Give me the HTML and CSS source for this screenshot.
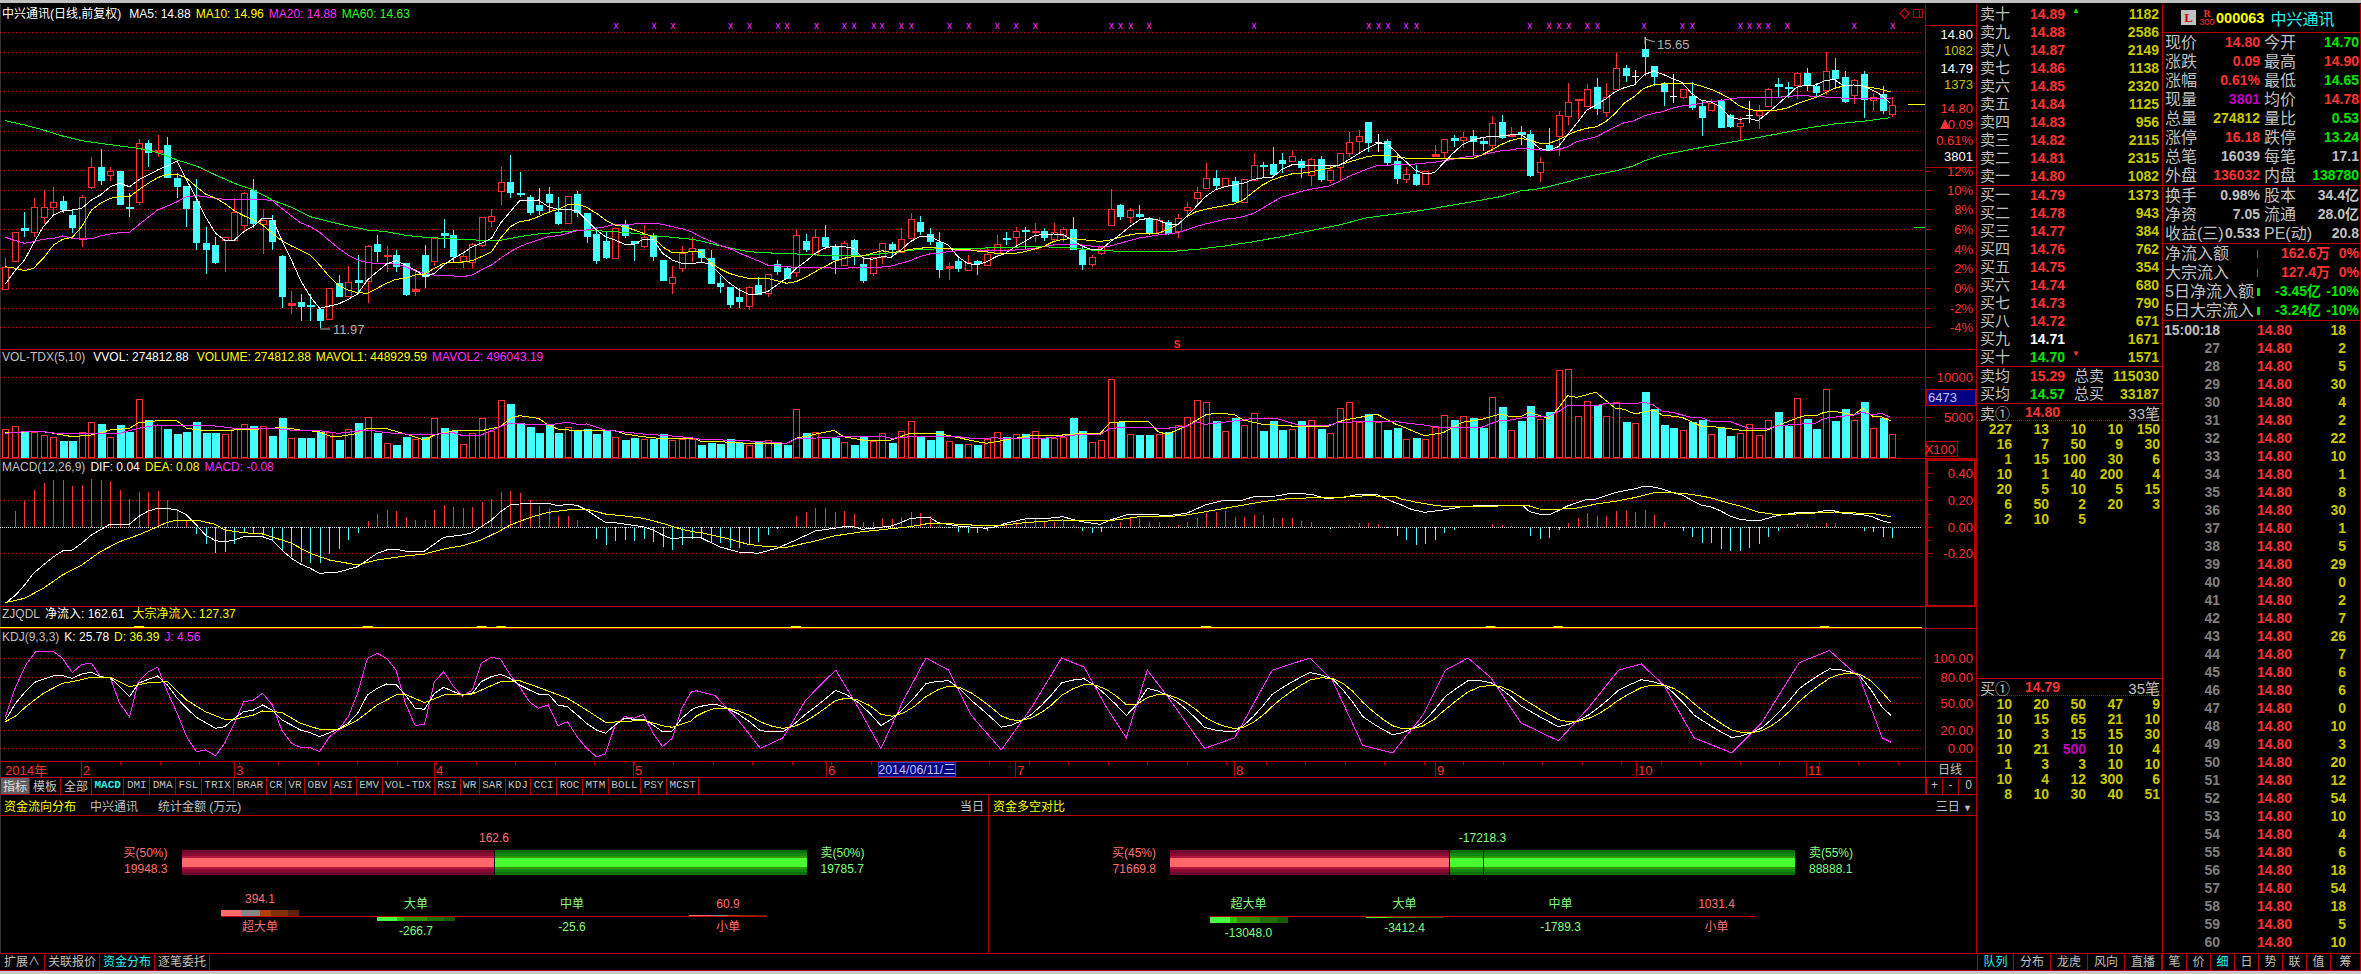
FILE: index.html
```html
<!DOCTYPE html>
<html lang="zh-CN">
<head>
<meta charset="utf-8">
<title>中兴通讯 日线</title>
<link rel="stylesheet" href="styles.css">
</head>
<body>
<div class="app">
  <div class="workspace">
    <section class="market">
      <div class="panel panel-main">
        <div class="panel-title t-main"><span class="w">中兴通讯(日线,前复权)</span><span class="w gap-l">MA5: 14.88</span><span class="y gap">MA10: 14.96</span><span class="m gap">MA20: 14.88</span><span class="g gap">MA60: 14.63</span></div>
        <svg id="svg-main" class="plot h-main"></svg>
      </div>
      <div class="panel panel-vol">
        <div class="panel-title t-vol"><span class="s">VOL-TDX(5,10)</span><span class="w gap-l">VVOL: 274812.88</span><span class="y gap-l">VOLUME: 274812.88</span><span class="y gap">MAVOL1: 448929.59</span><span class="m gap">MAVOL2: 496043.19</span></div>
        <svg id="svg-vol" class="plot h-vol"></svg>
      </div>
      <div class="panel panel-macd">
        <div class="panel-title t-macd"><span class="s">MACD(12,26,9)</span><span class="w gap">DIF: 0.04</span><span class="y gap">DEA: 0.08</span><span class="m gap">MACD: -0.08</span></div>
        <svg id="svg-macd" class="plot h-macd"></svg>
      </div>
      <div class="panel panel-zj">
        <div class="panel-title t-zj"><span class="s">ZJQDL</span><span class="w gap">净流入: 162.61</span><span class="y gap-l">大宗净流入: 127.37</span></div>
        <svg id="svg-zj" class="plot h-zj"></svg>
      </div>
      <div class="panel panel-kdj">
        <div class="panel-title t-kdj"><span class="s">KDJ(9,3,3)</span><span class="w gap">K: 25.78</span><span class="y gap">D: 36.39</span><span class="m gap">J: 4.56</span></div>
        <svg id="svg-kdj" class="plot h-kdj"></svg>
      </div>
      <div class="panel panel-time">
        <svg id="svg-time" class="plot h-time"></svg>
      </div>
      <div class="toolbar">
        <span class="tool tool-cn on">指标</span><span class="tool tool-cn">模板</span><span class="tool tool-cn">全部</span><span class="tool act">MACD</span><span class="tool">DMI</span><span class="tool">DMA</span><span class="tool">FSL</span><span class="tool">TRIX</span><span class="tool">BRAR</span><span class="tool">CR</span><span class="tool">VR</span><span class="tool">OBV</span><span class="tool">ASI</span><span class="tool">EMV</span><span class="tool">VOL-TDX</span><span class="tool">RSI</span><span class="tool">WR</span><span class="tool">SAR</span><span class="tool">KDJ</span><span class="tool">CCI</span><span class="tool">ROC</span><span class="tool">MTM</span><span class="tool">BOLL</span><span class="tool">PSY</span><span class="tool">MCST</span>
        <div class="zoom-btns"><span>+</span><span>-</span><span>0</span></div>
      </div>
      <div class="funds">
        <div class="fund fund-left">
          <div class="fund-head"><strong>资金流向分布</strong><span class="hd-a">中兴通讯</span><span class="hd-b">统计金额 (万元)</span><span class="hd-r">当日</span></div>
          <div class="fund-body">
            <div class="fund-total red">162.6</div>
            <div class="fund-main">
              <div class="fund-side side-l red"><span>买(50%)</span><span>19948.3</span></div>
              <div class="bigbar"><i class="seg-buy w50"></i><i class="seg-sell w50"></i></div>
              <div class="fund-side side-r green"><span>卖(50%)</span><span>19785.7</span></div>
            </div>
            <div class="minis">
              <div class="mini"><div class="mini-up"><span class="red">394.1</span><i class="mb-r mh6"></i></div><div class="mini-down"><span class="red">超大单</span></div></div>
              <div class="mini"><div class="mini-up"><span class="green lift">大单</span></div><div class="mini-down"><i class="mb-g mh4"></i><span class="green">-266.7</span></div></div>
              <div class="mini"><div class="mini-up"><span class="green lift">中单</span></div><div class="mini-down"><span class="green">-25.6</span></div></div>
              <div class="mini"><div class="mini-up"><span class="red lift2">60.9</span><i class="mb-r mh1"></i></div><div class="mini-down"><span class="red">小单</span></div></div>
            </div>
          </div>
        </div>
        <div class="fund fund-right">
          <div class="fund-head"><strong>资金多空对比</strong><span class="hd-r">三日 <em class="caret">▼</em></span></div>
          <div class="fund-body">
            <div class="fund-total green">-17218.3</div>
            <div class="fund-main">
              <div class="fund-side side-l red"><span>买(45%)</span><span>71669.8</span></div>
              <div class="bigbar bar-mark"><i class="seg-buy w45"></i><i class="seg-sell w55"></i></div>
              <div class="fund-side side-r green"><span>卖(55%)</span><span>88888.1</span></div>
            </div>
            <div class="minis">
              <div class="mini"><div class="mini-up"><span class="green lift">超大单</span></div><div class="mini-down"><i class="mb-g mh6"></i><span class="green">-13048.0</span></div></div>
              <div class="mini"><div class="mini-up"><span class="green lift">大单</span></div><div class="mini-down"><i class="mb-g mh1"></i><span class="green">-3412.4</span></div></div>
              <div class="mini"><div class="mini-up"><span class="green lift">中单</span></div><div class="mini-down"><span class="green">-1789.3</span></div></div>
              <div class="mini"><div class="mini-up"><span class="red lift">1031.4</span></div><div class="mini-down"><span class="red">小单</span></div></div>
            </div>
          </div>
        </div>
      </div>
    </section>

    <section class="book">
      <div class="book-group sells">
        <div class="b-row"><span>卖十</span><b class="up">14.89</b><i class="mark mk-g">▲</i><b class="qty">1182</b></div>
        <div class="b-row"><span>卖九</span><b class="up">14.88</b><i></i><b class="qty">2586</b></div>
        <div class="b-row"><span>卖八</span><b class="up">14.87</b><i></i><b class="qty">2149</b></div>
        <div class="b-row"><span>卖七</span><b class="up">14.86</b><i></i><b class="qty">1138</b></div>
        <div class="b-row"><span>卖六</span><b class="up">14.85</b><i></i><b class="qty">2320</b></div>
        <div class="b-row"><span>卖五</span><b class="up">14.84</b><i></i><b class="qty">1125</b></div>
        <div class="b-row"><span>卖四</span><b class="up">14.83</b><i></i><b class="qty">956</b></div>
        <div class="b-row"><span>卖三</span><b class="up">14.82</b><i></i><b class="qty">2115</b></div>
        <div class="b-row"><span>卖二</span><b class="up">14.81</b><i></i><b class="qty">2315</b></div>
        <div class="b-row"><span>卖一</span><b class="up">14.80</b><i></i><b class="qty">1082</b></div>
      </div>
      <div class="book-group buys">
        <div class="b-row"><span>买一</span><b class="up">14.79</b><i></i><b class="qty">1373</b></div>
        <div class="b-row"><span>买二</span><b class="up">14.78</b><i></i><b class="qty">943</b></div>
        <div class="b-row"><span>买三</span><b class="up">14.77</b><i></i><b class="qty">384</b></div>
        <div class="b-row"><span>买四</span><b class="up">14.76</b><i></i><b class="qty">762</b></div>
        <div class="b-row"><span>买五</span><b class="up">14.75</b><i></i><b class="qty">354</b></div>
        <div class="b-row"><span>买六</span><b class="up">14.74</b><i></i><b class="qty">680</b></div>
        <div class="b-row"><span>买七</span><b class="up">14.73</b><i></i><b class="qty">790</b></div>
        <div class="b-row"><span>买八</span><b class="up">14.72</b><i></i><b class="qty">671</b></div>
        <div class="b-row"><span>买九</span><b class="wh">14.71</b><i></i><b class="qty">1671</b></div>
        <div class="b-row"><span>买十</span><b class="dn">14.70</b><i class="mark mk-r">▼</i><b class="qty">1571</b></div>
      </div>
      <div class="book-group avgs">
        <div class="b-row avg"><span>卖均</span><b class="up">15.29</b><span class="lb2">总卖</span><b class="qty">115030</b></div>
        <div class="b-row avg"><span>买均</span><b class="dn">14.57</b><span class="lb2">总买</span><b class="qty">33187</b></div>
      </div>
      <div class="queue queue-s">
        <div class="q-head"><span>卖①</span><b class="up">14.80</b><span class="q-n">33笔</span></div>
        <div class="q-grid">
          <b>227</b><b>13</b><b>10</b><b>10</b><b>150</b>
          <b>16</b><b>7</b><b>50</b><b>9</b><b>30</b>
          <b>1</b><b>15</b><b>100</b><b>30</b><b>6</b>
          <b>10</b><b>1</b><b>40</b><b>200</b><b>4</b>
          <b>20</b><b>5</b><b>10</b><b>5</b><b>15</b>
          <b>6</b><b>50</b><b>2</b><b>20</b><b>3</b>
          <b>2</b><b>10</b><b>5</b>
        </div>
      </div>
      <div class="queue queue-b">
        <div class="q-head"><span>买①</span><b class="up">14.79</b><span class="q-n">35笔</span></div>
        <div class="q-grid">
          <b>10</b><b>20</b><b>50</b><b>47</b><b>9</b>
          <b>10</b><b>15</b><b>65</b><b>21</b><b>10</b>
          <b>10</b><b>3</b><b>15</b><b>15</b><b>30</b>
          <b>10</b><b>21</b><b class="pu">500</b><b>10</b><b>4</b>
          <b>1</b><b>3</b><b>3</b><b>10</b><b>10</b>
          <b>10</b><b>4</b><b>12</b><b>300</b><b>6</b>
          <b>8</b><b>10</b><b>30</b><b>40</b><b>51</b>
        </div>
      </div>
    </section>

    <section class="quote">
      <div class="q-title"><span class="badge">L</span><span class="r300"><b>R</b><small>300</small></span><b class="code">000063</b><span class="name">中兴通讯</span></div>
      <div class="q-block">
        <div class="qr"><div class="qc"><span>现价</span><b class="up">14.80</b></div><div class="qc"><span>今开</span><b class="dn">14.70</b></div></div>
        <div class="qr"><div class="qc"><span>涨跌</span><b class="up">0.09</b></div><div class="qc"><span>最高</span><b class="up">14.90</b></div></div>
        <div class="qr"><div class="qc"><span>涨幅</span><b class="up">0.61%</b></div><div class="qc"><span>最低</span><b class="dn">14.65</b></div></div>
        <div class="qr"><div class="qc"><span>现量</span><b class="pu">3801</b></div><div class="qc"><span>均价</span><b class="up">14.78</b></div></div>
        <div class="qr"><div class="qc"><span>总量</span><b class="qty">274812</b></div><div class="qc"><span>量比</span><b class="dn">0.53</b></div></div>
        <div class="qr"><div class="qc"><span>涨停</span><b class="up">16.18</b></div><div class="qc"><span>跌停</span><b class="dn">13.24</b></div></div>
        <div class="qr"><div class="qc"><span>总笔</span><b class="gr">16039</b></div><div class="qc"><span>每笔</span><b class="gr">17.1</b></div></div>
        <div class="qr"><div class="qc"><span>外盘</span><b class="up">136032</b></div><div class="qc"><span>内盘</span><b class="dn">138780</b></div></div>
      </div>
      <div class="q-block">
        <div class="qr"><div class="qc"><span>换手</span><b class="gr">0.98%</b></div><div class="qc"><span>股本</span><b class="gr">34.4亿</b></div></div>
        <div class="qr"><div class="qc"><span>净资</span><b class="gr">7.05</b></div><div class="qc"><span>流通</span><b class="gr">28.0亿</b></div></div>
        <div class="qr"><div class="qc"><span>收益(三)</span><b class="gr">0.533</b></div><div class="qc"><span>PE(动)</span><b class="gr">20.8</b></div></div>
      </div>
      <div class="q-block">
        <div class="fr"><span class="fl">净流入额</span><i class="tk tk-r"></i><b class="up fv">162.6万</b><b class="up fp">0%</b></div>
        <div class="fr"><span class="fl">大宗流入</span><i class="tk tk-r"></i><b class="up fv">127.4万</b><b class="up fp">0%</b></div>
        <div class="fr"><span class="fl">5日净流入额</span><i class="tk tk-g"></i><b class="dn fv2">-3.45亿</b><b class="dn fp">-10%</b></div>
        <div class="fr"><span class="fl">5日大宗流入</span><i class="tk tk-g"></i><b class="dn fv2">-3.24亿</b><b class="dn fp">-10%</b></div>
      </div>
      <div id="ticks" class="ticks">
        <div class="tr"><b class="first">15:00:18</b><b class="up">14.80</b><b class="qty">18</b></div>
        <div class="tr"><b>27</b><b class="up">14.80</b><b class="qty">2</b></div>
        <div class="tr"><b>28</b><b class="up">14.80</b><b class="qty">5</b></div>
        <div class="tr"><b>29</b><b class="up">14.80</b><b class="qty">30</b></div>
        <div class="tr"><b>30</b><b class="up">14.80</b><b class="qty">4</b></div>
        <div class="tr"><b>31</b><b class="up">14.80</b><b class="qty">2</b></div>
        <div class="tr"><b>32</b><b class="up">14.80</b><b class="qty">22</b></div>
        <div class="tr"><b>33</b><b class="up">14.80</b><b class="qty">10</b></div>
        <div class="tr"><b>34</b><b class="up">14.80</b><b class="qty">1</b></div>
        <div class="tr"><b>35</b><b class="up">14.80</b><b class="qty">8</b></div>
        <div class="tr"><b>36</b><b class="up">14.80</b><b class="qty">30</b></div>
        <div class="tr"><b>37</b><b class="up">14.80</b><b class="qty">1</b></div>
        <div class="tr"><b>38</b><b class="up">14.80</b><b class="qty">5</b></div>
        <div class="tr"><b>39</b><b class="up">14.80</b><b class="qty">29</b></div>
        <div class="tr"><b>40</b><b class="up">14.80</b><b class="qty">0</b></div>
        <div class="tr"><b>41</b><b class="up">14.80</b><b class="qty">2</b></div>
        <div class="tr"><b>42</b><b class="up">14.80</b><b class="qty">7</b></div>
        <div class="tr"><b>43</b><b class="up">14.80</b><b class="qty">26</b></div>
        <div class="tr"><b>44</b><b class="up">14.80</b><b class="qty">7</b></div>
        <div class="tr"><b>45</b><b class="up">14.80</b><b class="qty">6</b></div>
        <div class="tr"><b>46</b><b class="up">14.80</b><b class="qty">6</b></div>
        <div class="tr"><b>47</b><b class="up">14.80</b><b class="qty">0</b></div>
        <div class="tr"><b>48</b><b class="up">14.80</b><b class="qty">10</b></div>
        <div class="tr"><b>49</b><b class="up">14.80</b><b class="qty">3</b></div>
        <div class="tr"><b>50</b><b class="up">14.80</b><b class="qty">20</b></div>
        <div class="tr"><b>51</b><b class="up">14.80</b><b class="qty">12</b></div>
        <div class="tr"><b>52</b><b class="up">14.80</b><b class="qty">54</b></div>
        <div class="tr"><b>53</b><b class="up">14.80</b><b class="qty">10</b></div>
        <div class="tr"><b>54</b><b class="up">14.80</b><b class="qty">4</b></div>
        <div class="tr"><b>55</b><b class="up">14.80</b><b class="qty">6</b></div>
        <div class="tr"><b>56</b><b class="up">14.80</b><b class="qty">18</b></div>
        <div class="tr"><b>57</b><b class="up">14.80</b><b class="qty">54</b></div>
        <div class="tr"><b>58</b><b class="up">14.80</b><b class="qty">18</b></div>
        <div class="tr"><b>59</b><b class="up">14.80</b><b class="qty">5</b></div>
        <div class="tr"><b>60</b><b class="up">14.80</b><b class="qty">10</b></div>
      </div>
    </section>
  </div>
  <footer class="tabbar">
    <div class="tabs tabs-a"><span>扩展∧</span><span>关联报价</span><span class="cy">资金分布</span><span>逐笔委托</span></div>
    <div class="tabs tabs-b"><span class="cy">队列</span><span>分布</span><span>龙虎</span><span>风向</span><span>直播</span></div>
    <div class="tabs tabs-c"><span>笔</span><span>价</span><span class="cy">细</span><span>日</span><span>势</span><span>联</span><span>值</span><span>筹</span></div>
  </footer>
</div>
<script src="app.js"></script>
</body>
</html>
```
FILE: styles.css
```css
* { box-sizing: border-box; }
html, body { margin: 0; padding: 0; background: #000; }
body { font-family: "Liberation Sans", "Noto Sans CJK SC", sans-serif; overflow: hidden; }
.app { width: 2361px; height: 974px; background: #000; border-top: 3px solid #c0c0c0; border-bottom: 3px solid #c8c8c8; display: flex; flex-direction: column; padding-top: 1px; color: #c0c0c0; }
.workspace { display: flex; height: 949px; }
.market { width: 1976px; display: flex; flex-direction: column; border-left: 1px solid #333; }
.panel { position: relative; border-bottom: 1px solid #b40000; margin-left: -1px; }
.panel-main { height: 346px; }
.panel-vol { height: 109px; }
.panel-macd { height: 148px; }
.panel-zj { height: 22px; }
.panel-kdj { height: 133px; }
.panel-time { height: 16px; }
.plot { display: block; width: 1976px; }
.h-main { height: 345px; }
.h-vol { height: 108px; }
.h-macd { height: 147px; }
.h-zj { height: 21px; }
.h-kdj { height: 132px; }
.h-time { height: 15px; }
.panel-title { position: absolute; left: 2px; font-size: 12px; line-height: 14px; white-space: nowrap; z-index: 2; }
.t-main { top: 3px; }
.t-vol { top: 0; }
.t-macd { top: 1px; }
.t-zj { top: 0; }
.t-kdj { top: 1px; }
.gap { margin-left: 5px; }
.gap-l { margin-left: 8px; }
.w { color: #fff; }
.s { color: #c0c0c0; }
.y { color: #ff0; }
.m { color: #ff2dff; }
.g { color: #2dff2d; }

/* svg classes */
.grid { stroke: #c80000; stroke-width: 1; stroke-dasharray: 1 3; shape-rendering: crispEdges; }
.zero { stroke: #e0e0e0; stroke-width: 1; stroke-dasharray: 1 1; shape-rendering: crispEdges; }
.rule { stroke: #b40000; stroke-width: 1; shape-rendering: crispEdges; fill: none; }
.rule2 { stroke: #b40000; stroke-width: 2; shape-rendering: crispEdges; fill: none; }
.c-r { stroke: #ff3232; fill: #000; stroke-width: 1; shape-rendering: crispEdges; }
.c-rf { stroke: #ff3232; fill: #ff3232; stroke-width: 1; shape-rendering: crispEdges; }
.c-c { stroke: #44ffff; fill: #44ffff; stroke-width: 1; shape-rendering: crispEdges; }
.c-w { stroke: #fff; fill: #fff; stroke-width: 1; shape-rendering: crispEdges; }
.l-w, .l-y, .l-m, .l-g { fill: none; stroke-width: 1; shape-rendering: crispEdges; }
.l-w { stroke: #fff; }
.l-y { stroke: #ff0; }
.l-m { stroke: #ff2dff; }
.l-g { stroke: #19f019; }
.ax { font-size: 13px; fill: #ff3232; text-anchor: end; dominant-baseline: central; }
.ax-w { fill: #fff; }
.ax-o { fill: #c8c800; }
.ax-lb { fill: #c0c0ff; text-anchor: start; }
.xm { font-size: 10px; fill: #ff2dff; text-anchor: middle; dominant-baseline: central; }
.note { font-size: 13px; fill: #b0b0b0; dominant-baseline: central; }
.note-l { fill: none; stroke: #b0b0b0; stroke-width: 1; }
.sm { font-size: 10px; font-weight: bold; fill: #ff3232; text-anchor: middle; dominant-baseline: central; }
.tl { font-size: 13px; fill: #ff3232; dominant-baseline: central; }
.tl-d { font-size: 12.5px; fill: #c0c0ff; text-anchor: middle; dominant-baseline: central; }
.tl-box { fill: #000080; stroke: #3838c0; shape-rendering: crispEdges; }
.tl-c { font-size: 12px; fill: #c0c0c0; text-anchor: middle; dominant-baseline: central; }
.blue-box { fill: #000080; stroke: #b40000; shape-rendering: crispEdges; }
.y-bump { fill: #ff0; }
.tri { fill: #ff3232; }

/* toolbar */
.toolbar { display: flex; height: 17px; border-bottom: 1px solid #b40000; margin-left: -1px; position: relative; align-items: stretch; }
.tool { font-family: "Liberation Mono", "Noto Sans CJK SC", monospace; font-size: 11px; line-height: 15px; padding: 0 2.5px; border-right: 1px solid #b40000; color: #c0c0c0; white-space: nowrap; text-align: center; }
.tool-cn { font-family: "Noto Sans CJK SC", sans-serif; font-size: 12px; padding: 0 3px; width: 31px; }
.tool.on { background: #606060; color: #e0e0e0; margin-left: 1px; width: 29px; padding: 0 2px; }
.tool.act { color: #28f0f0; font-weight: bold; }
.zoom-btns { margin-left: auto; width: 51px; display: grid; grid-template-columns: 16px 16px 19px; border-left: 2px solid #b40000; }
.zoom-btns span { text-align: center; font-size: 12px; line-height: 15px; border-right: 1px solid #b40000; color: #c0c0c0; }
.zoom-btns span:last-child { border-right: 0; }

/* funds */
.funds { display: flex; height: 158px; margin-left: -1px; }
.fund { display: flex; flex-direction: column; }
.fund-left { width: 989px; border-right: 1px solid #b40000; }
.fund-right { width: 987px; }
.fund-head { height: 21px; border-bottom: 1px solid #b40000; display: flex; align-items: center; font-size: 12px; color: #c0c0c0; padding: 0 4px; white-space: nowrap; }
.fund-head strong { color: #ff0; font-weight: normal; }
.hd-a { margin-left: 14px; }
.hd-b { margin-left: 20px; }
.hd-r { margin-left: auto; }
.caret { font-style: normal; font-size: 9px; }
.fund-body { flex: 1; display: flex; flex-direction: column; align-items: center; font-size: 12px; }
.red { color: #ff7070; }
.green { color: #80ff80; }
.fund-total { margin-top: 15px; line-height: 14px; height: 19px; }
.fund-main { display: grid; grid-template-columns: 60px 625px 60px; column-gap: 14px; align-items: start; height: 25px; }
.fund-side { display: flex; flex-direction: column; line-height: 16px; margin-top: -5px; }
.side-l { text-align: right; }
.bigbar { height: 25px; display: flex; position: relative; }
.bigbar i { display: block; height: 25px; }
.w50 { width: 50%; }
.w45 { width: 44.6%; }
.w55 { width: 55.4%; }
.seg-buy { background: linear-gradient(#6e0a30 0 3px, #8c0a30 3px 6px, #b41440 6px 8px, #ff6868 8px 17px, #b41440 17px 19px, #8c0a30 19px 22px, #6e0a30 22px); }
.seg-sell { background: linear-gradient(#0a700a 0 3px, #108a10 3px 6px, #309a00 6px 8px, #46ff30 8px 17px, #309a00 17px 19px, #108a10 19px 22px, #0a700a 22px); border-left: 1px solid #000; }
.bar-mark::after { content: ""; position: absolute; left: 313px; top: 0; width: 1px; height: 25px; background: #000; }
.minis { display: grid; grid-template-columns: repeat(4, 78px); column-gap: 78px; margin-top: 15px; width: 546px; background: linear-gradient(#c00000, #c00000) no-repeat 0 26px / 100% 1px; }
.mini { display: flex; flex-direction: column; align-items: center; }
.mini-up { height: 26px; width: 78px; display: flex; flex-direction: column; align-items: center; justify-content: flex-end; }
.mini-down { width: 78px; padding-top: 1px; display: flex; flex-direction: column; align-items: center; }
.mini span { line-height: 14px; }
.mini-up span { margin-bottom: 4px; }
.mini-up .lift { margin-bottom: 5px; }
.mini-up .lift2 { margin-bottom: 4px; }
.mini-down span { margin-top: 3px; }
.mb-r, .mb-g { display: block; width: 78px; flex: none; }
.mb-r { background: linear-gradient(90deg, #ff6a6a 0 20px, #888 20px 39px, #b04000 39px 50px, #803000 50px 67px, #602000 67px); }
.mb-g { background: linear-gradient(90deg, #44ff44 0 20px, #30c000 20px 27px, #309000 27px 50px, #207000 50px 67px, #185a00 67px); }
.mh6 { height: 6px; }
.mh4 { height: 4px; }
.mh1 { height: 1px; }

/* order book */
.book { width: 186px; border-left: 1px solid #b40000; display: flex; flex-direction: column; }
.book-group { border-bottom: 1px solid #b40000; padding-left: 3px; padding-right: 3px; }
.sells { padding-top: 1px; height: 182px; }
.buys { height: 181px; }
.avgs { height: 37px; }
.b-row { display: grid; grid-template-columns: 50px 42px 1fr auto; height: 18px; align-items: center; line-height: 18px; font-size: 15px; color: #c0c0c0; white-space: nowrap; }
.b-row.avg { grid-template-columns: 50px 44px auto 1fr; }
.lb2 { color: #c0c0c0; }
.b-row .qty { text-align: right; }
.b-row .lb2 + .qty { justify-self: end; }
b { font-size: 14px; font-weight: bold; }
.up { color: #ff3232; }
.dn { color: #00e600; }
.wh { color: #fff; }
.qty { color: #c8c800; }
.pu { color: #c000c0; }
.gr { color: #c0c0c0; }
i { font-style: normal; }
.mark { font-size: 8px; line-height: 12px; align-self: start; }
.mk-g { color: #00e600; }
.mk-r { color: #ff3232; }
.queue-s { height: 275px; border-bottom: 1px solid #b40000; }
.queue-b { flex: 1; }
.q-head { display: flex; height: 17px; align-items: center; padding: 0 2px 0 3px; font-size: 15px; color: #c0c0c0; border-bottom: 1px dotted #c80000; white-space: nowrap; }
.q-head b { margin-left: 15px; }
.q-n { margin-left: auto; }
.q-grid { display: grid; grid-template-columns: 35px repeat(4, 37px); padding-top: 1px; }
.q-grid b { text-align: right; height: 15px; line-height: 15px; color: #c8c800; }
.q-grid b.pu { color: #c000c0; }

/* quote */
.quote { width: 199px; border-left: 1px solid #b40000; border-right: 1px solid #b40000; display: flex; flex-direction: column; }
.q-title { height: 29px; border-bottom: 1px solid #b40000; display: flex; align-items: center; padding-left: 18px; padding-bottom: 1px; }
.badge { width: 15px; height: 15px; background: #c0c0c0; color: #d00000; font: bold 13px/15px "Liberation Serif", serif; text-align: center; }
.r300 { width: 16px; margin-left: 3px; display: flex; flex-direction: column; align-items: center; color: #ff3232; line-height: 9px; }
.r300 b { font-size: 10px; font-family: "Liberation Serif", serif; line-height: 9px; }
.r300 small { font-size: 9px; line-height: 9px; }
.code { color: #ff0; margin-left: 1px; font-size: 14.5px; }
.name { color: #28f0f0; font-size: 16px; margin-left: 6px; }
.q-block { border-bottom: 1px solid #b40000; padding: 0 1px 0 2px; }
.qr { display: flex; height: 19px; gap: 4px; align-items: center; }
.qc { width: 95px; display: flex; justify-content: space-between; align-items: center; font-size: 16px; line-height: 19px; color: #c0c0c0; white-space: nowrap; }
.fr { display: flex; height: 19px; align-items: center; font-size: 16px; line-height: 19px; color: #c0c0c0; white-space: nowrap; }
.fl { width: 92px; }
.tk { display: block; height: 8px; flex: none; }
.tk-r { width: 1px; background: #c04040; margin-right: 2px; }
.tk-g { width: 3px; background: #00e600; }
.fv { width: 70px; text-align: right; white-space: nowrap; flex: none; }
.fv2 { width: 61px; text-align: right; white-space: nowrap; flex: none; }
.fp { flex: 1; text-align: right; }
.ticks { flex: 1; }
.tr { display: grid; grid-template-columns: 57px 72px 54px; height: 18px; line-height: 18px; }
.tr b { text-align: right; }
.tr b:first-child { color: #808080; }
.tr b.first { color: #c0c0c0; }

/* tab bar */
.tabbar { display: flex; height: 18px; border-top: 1px solid #b40000; border-bottom: 1px solid #b40000; }
.tabs { display: flex; height: 16px; }
.tabs span { font-size: 12px; line-height: 16px; border-right: 1px solid #b40000; text-align: center; color: #c0c0c0; white-space: nowrap; }
.tabs .cy { color: #28f0f0; }
.tabs-a { width: 1977px; }
.tabs-a span:nth-child(1) { width: 45px; }
.tabs-a span:nth-child(n+2) { width: 55px; }
.tabs-b { width: 185px; border-left: 1px solid #b40000; }
.tabs-b span { width: 37px; }
.tabs-b span:first-child { width: 36px; }
.tabs-c { flex: 1; border-left: 1px solid #b40000; }
.tabs-c span { width: 24px; }
.tabs-c span:last-child { width: 30px; }
```
FILE: app.js
```js
(function () {
  var Z1 = [0, 2.24], Z2 = [700, 2.24], Z3 = [1400, 1568 / 580];
  var XI = function (i) { return 5.4 + 9.53 * i; };
  function seg(z, y0, a) {
    var o = [];
    for (var i = 0; i < a.length; i += 2) o.push([z[0] + a[i] / z[1], y0 + a[i + 1] / 3]);
    return o;
  }
  function poly(p, cls) {
    return '<polyline class="' + cls + '" points="' + p.map(function (q) { return q[0].toFixed(1) + ',' + q[1].toFixed(1); }).join(' ') + '"/>';
  }
  function ln(x1, y1, x2, y2, c) { return '<line class="' + c + '" x1="' + x1 + '" y1="' + y1 + '" x2="' + x2 + '" y2="' + y2 + '"/>'; }
  function rc(x, y, w, h, c) { return '<rect class="' + c + '" x="' + x + '" y="' + y + '" width="' + w + '" height="' + h + '"/>'; }
  function tx(x, y, s, c) { return '<text class="' + c + '" x="' + x + '" y="' + y + '">' + s + '</text>'; }
  function put(id, top, h, body) {
    var el = document.getElementById(id);
    el.setAttribute('viewBox', '0 ' + top + ' 1976 ' + h);
    el.innerHTML = body;
  }

  /* type, bodyTop, bodyBottom, wickTop, wickBottom — chart pixels x3 */
  var C = [
    'R',800,865,775,865, 'R',697,785,697,785, 'C',685,690,637,712, 'R',620,695,595,712, 'R',620,650,570,672,
    'R',605,620,562,645, 'C',603,627,588,640, 'C',645,682,630,698, 'R',590,712,585,742, 'R',502,563,472,566,
    'C',502,540,448,555, 'R',512,525,500,542, 'C',514,612,514,614, 'C',622,626,580,650, 'R',428,605,418,615,
    'C',428,455,420,500, 'R',452,458,405,470, 'C',435,530,412,535, 'C',534,558,520,595, 'C',558,624,558,680,
    'C',603,725,538,750, 'C',729,747,682,822, 'C',735,786,712,792, 'R',712,722,712,815, 'R',637,720,595,722,
    'R',580,677,575,695, 'C',570,670,538,685, 'R',660,672,628,762, 'C',660,722,645,750, 'C',768,887,765,925,
    'R',910,915,873,942, 'C',906,918,882,962, 'C',915,920,883,962, 'C',927,960,927,985, 'R',865,958,865,958,
    'C',850,890,825,892, 'R',847,890,797,892, 'C',840,846,765,880, 'R',738,842,735,908, 'C',732,752,705,785,
    'R',766,770,738,815, 'C',766,798,750,815, 'C',790,882,788,888, 'R',868,875,808,888, 'C',766,830,735,865,
    'R',715,785,712,798, 'C',700,706,658,745, 'C',706,770,690,790, 'R',767,782,760,805, 'R',733,787,730,805,
    'R',652,735,652,740, 'R',647,662,628,682, 'R',547,575,500,615, 'C',547,578,465,595, 'C',580,584,516,590,
    'C',592,638,585,645, 'C',616,632,565,645, 'C',582,606,562,640, 'C',636,668,590,675, 'R',587,668,587,668,
    'C',582,635,572,650, 'C',640,710,640,728, 'C',702,780,680,792, 'C',723,772,695,778, 'R',683,773,683,775,
    'C',672,705,660,715, 'C',725,729,725,782, 'R',710,738,675,745, 'C',705,768,700,782, 'C',780,840,780,840,
    'R',832,850,798,882, 'R',760,806,738,815, 'R',745,755,710,785,
    'C',748,772,748,790, 'C',775,850,750,852, 'C',850,858,828,878, 'C',860,910,860,925, 'C',892,905,865,925,
    'R',860,917,858,930, 'C',855,882,830,885, 'R',823,880,823,890, 'C',793,813,780,825, 'C',803,833,800,835,
    'R',706,818,688,830, 'C',724,747,702,755, 'R',712,762,688,768, 'C',712,738,675,745, 'C',737,777,733,822,
    'R',728,795,722,795, 'C',720,768,718,795, 'C',793,840,770,848, 'R',770,818,770,828, 'R',728,770,728,792,
    'C',733,748,726,770, 'R',718,758,685,760, 'R',658,716,640,716, 'C',666,692,648,706, 'C',703,723,685,735,
    'C',726,806,696,834, 'R',798,804,788,840, 'C',784,804,768,815, 'R',787,812,765,812, 'C',785,789,780,825,
    'R',761,793,745,795, 'R',733,760,705,770, 'C',714,718,695,735, 'R',694,712,680,740, 'C',690,693,682,750,
    'R',694,698,668,725, 'C',694,712,685,722, 'R',696,716,670,722, 'R',686,703,682,725, 'C',688,748,650,750,
    'C',750,793,740,810, 'R',772,793,765,802, 'R',742,760,738,765, 'R',628,677,567,677, 'C',615,647,612,660,
    'R',630,650,625,670, 'C',643,649,615,655, 'C',655,700,652,706, 'R',660,695,652,696, 'C',667,700,660,705,
    'R',655,695,642,713, 'R',620,628,605,655, 'R',575,592,560,615, 'R',535,566,490,568, 'C',534,554,510,570,
    'R',535,560,535,562, 'C',543,603,530,605, 'R',538,607,538,608, 'R',496,540,460,540, 'C',495,500,485,535,
    'C',492,522,442,530, 'C',480,488,460,520, 'R',469,483,453,485, 'C',483,502,478,533, 'R',478,527,475,557,
    'C',477,538,468,545, 'R',511,540,495,548, 'R',460,502,460,540, 'R',427,460,397,472, 'R',409,425,390,455,
    'C',366,426,366,455, 'W',428,428,402,455, 'C',423,486,418,495, 'C',483,533,460,552,
    'R',523,538,500,548, 'C',522,552,495,558, 'R',514,553,512,555, 'R',464,470,435,472, 'R',418,458,418,475,
    'C',415,420,405,442, 'R',412,422,395,445, 'C',408,423,390,465, 'C',424,430,415,452, 'R',368,435,348,452,
    'C',367,412,345,418, 'R',402,408,380,412, 'C',398,402,378,435, 'C',403,525,390,530, 'R',485,514,472,545,
    'C',435,448,385,452, 'R',346,410,332,467, 'R',305,346,250,375, 'R',298,302,298,358, 'R',268,320,253,322,
    'C',262,326,235,345, 'R',290,334,248,350, 'R',205,268,158,268, 'C',205,227,195,245, 'W',228,228,210,255,
    'C',148,170,112,228, 'C',199,230,198,258, 'C',248,272,245,318, 'W',290,290,222,308, 'R',268,292,268,297,
    'C',288,322,245,330, 'C',318,350,300,407, 'R',308,328,298,330, 'C',302,380,296,381, 'C',345,378,342,384,
    'R',370,380,352,420, 'W',345,345,303,370, 'R',332,343,315,387, 'R',268,320,265,322, 'C',252,258,235,290,
    'C',263,265,245,295, 'R',220,257,215,298, 'C',220,255,205,272, 'C',257,275,250,290, 'R',214,272,157,285,
    'C',211,234,175,265, 'C',232,305,213,310, 'R',240,285,238,312, 'C',223,297,212,355, 'R',290,300,280,332,
    'C',283,332,257,342, 'R',314,340,290,350
  ];
  var MA5 = seg(Z1, 0, [12,852,35,810,55,780,75,730,97,680,120,645,140,633,162,630,183,625,205,600,225,585,247,560,268,550,290,560,310,540,332,525,353,510,375,497,397,483,418,540,440,595,460,650,483,700,503,720,525,720,546,695,568,678,588,655,610,655,631,720,653,780,673,840,695,890,716,925,738,918,758,912,780,898,801,882,823,840,845,815,866,792,887,782,908,795,930,810,951,830,973,820,994,795,1016,775,1036,760,1058,740,1078,730,1101,715,1121,670,1143,635,1164,602,1186,602,1206,600,1228,620,1250,628,1271,628,1293,632,1314,660,1336,690,1356,710,1378,720,1399,733,1421,733,1441,718,1463,718,1484,760,1506,780,1527,790,1549,790])
    .concat(seg(Z2, 0, [0,788,22,790,43,820,65,848,86,868,108,882,130,882,151,875,172,855,194,835,215,805,236,785,258,760,279,745,300,738,322,740,343,745,364,773,386,778,407,770,428,772,450,750,471,725,492,710,514,708,534,722,556,735,578,770,599,790,620,795,642,785,663,770,684,760,706,740,727,725,748,708,769,703,791,702,812,703,834,720,855,738,876,748,897,750,919,725,940,705,962,680,984,660,1004,655,1026,660,1046,672,1069,675,1090,650,1111,620,1132,590,1154,570,1175,560,1196,555,1217,550,1240,538,1260,534,1282,532,1302,510,1325,495,1345,493,1367,497,1388,497,1409,498,1431,497,1452,480,1474,462,1495,445,1517,430,1537,430,1559,455]))
    .concat(seg(Z3, 0, [0,470,14,483,41,510,66,522,93,518,117,490,143,460,168,435,196,420,221,413,247,408,271,408,298,405,325,403,350,420,377,445,402,452,428,440,453,405,478,370,505,330,531,315,556,297,582,275,606,263,633,255,659,225,685,213,709,222,735,235,762,247,788,280,813,300,839,305,866,320,890,350,917,358,942,355,968,362,993,340,1019,315,1045,290,1072,262,1097,255,1123,255,1147,243,1174,238,1199,258,1226,255,1251,258,1277,270,1301,285,1326,310]));
  var MA10 = seg(Z1, 0, [12,800,35,805,55,812,75,805,97,775,120,735,140,718,162,712,183,680,205,630,225,610,247,595,268,590,290,590,310,570,332,550,353,533,375,522,397,522,418,535,440,560,460,582,483,595,503,610,525,632,546,647,568,660,588,675,610,700,631,722,653,738,673,750,695,765,716,795,738,830,758,855,780,870,801,878,823,880,845,865,866,850,887,838,908,835,930,825,951,822,973,805,994,790,1016,786,1036,786,1058,782,1078,770,1101,755,1121,715,1143,680,1164,665,1186,660,1206,650,1228,637,1250,628,1271,615,1293,612,1314,622,1336,640,1356,660,1378,675,1399,680,1421,690,1441,700,1463,710,1484,740,1506,758,1527,758,1549,755])
    .concat(seg(Z2, 0, [0,755,22,785,43,805,65,820,86,828,108,835,130,836,151,835,172,842,194,850,215,845,236,832,258,815,279,800,300,785,322,775,343,770,364,768,386,760,407,752,428,757,450,755,471,748,492,745,514,742,534,745,556,746,578,748,599,748,620,753,642,755,663,760,684,762,706,760,727,755,748,748,769,740,791,725,812,718,834,716,855,718,876,722,897,724,919,720,940,712,962,705,984,700,1004,702,1026,700,1046,690,1069,675,1090,650,1111,635,1132,628,1154,622,1175,617,1196,612,1217,600,1240,575,1260,555,1282,540,1302,530,1325,522,1345,520,1367,516,1388,510,1409,505,1431,495,1452,487,1474,478,1495,470,1517,466,1537,466,1559,470]))
    .concat(seg(Z3, 0, [14,474,200,474,221,465,247,450,271,435,298,422,325,415,350,420,377,430,402,430,428,420,453,405,478,393,505,385,531,380,556,365,582,340,606,310,633,290,659,265,685,255,709,252,735,250,762,252,788,250,813,258,839,267,866,280,890,295,917,317,942,328,968,332,993,332,1019,330,1045,325,1072,312,1097,302,1123,293,1147,280,1174,265,1199,258,1226,255,1251,258,1277,263,1301,268,1326,276]));
  var MA20 = seg(Z1, 0, [12,712,35,722,55,730,75,725,97,718,120,715,140,708,162,715,183,718,205,716,225,708,247,702,268,698,290,697,310,675,332,652,353,630,375,618,397,605,418,590,440,587,460,590,483,595,503,598,588,598,610,602,631,625,653,648,673,668,695,680,716,697,738,722,758,745,780,765,801,780,823,788,845,790,866,790,887,793,908,800,930,812,951,820,973,825,994,825,1016,828,1036,830,1058,825,1078,810,1101,795,1121,775,1143,755,1164,740,1186,728,1206,720,1228,710,1250,707,1271,700,1293,692,1314,690,1336,685,1356,680,1378,672,1421,672,1441,670,1463,670,1484,673,1506,680,1527,686,1549,695])
    .concat(seg(Z2, 0, [0,710,22,722,43,735,65,745,86,758,108,770,130,782,151,795,172,797,194,800,215,802,279,802,300,805,322,805,343,803,364,801,407,801,428,798,450,790,471,782,492,770,514,762,534,760,556,755,578,752,663,752,684,750,706,750,727,748,748,745,769,740,791,735,812,733,834,733,855,735,876,738,919,738,940,730,962,722,984,714,1004,710,1026,705,1046,702,1069,698,1090,690,1111,680,1132,672,1154,665,1175,658,1196,655,1217,650,1240,640,1260,625,1282,607,1302,592,1325,583,1345,575,1367,568,1388,563,1409,558,1431,545,1452,530,1474,518,1495,507,1517,497,1537,496,1559,494]))
    .concat(seg(Z3, 0, [14,493,41,492,93,487,143,478,168,472,221,465,247,458,271,453,298,450,325,445,350,447,377,450,402,452,428,449,453,440,478,425,505,417,531,410,556,395,582,380,606,368,633,362,659,348,685,340,709,335,735,325,762,318,788,315,813,310,839,305,866,302,890,297,917,293,942,292,1019,292,1045,290,1072,287,1097,287,1123,290,1174,292,1199,295,1326,295]));
  var MA60 = seg(Z1, 0, [12,362,55,375,97,390,140,408,183,422,225,430,268,438,310,445,353,458,397,480,440,498,483,525,525,550,568,570,610,600,653,622,695,650,738,665,780,678,823,690,866,695,908,706,951,712,994,715,1036,718,1078,721,1121,721,1164,710,1206,702,1250,697,1293,692,1336,692,1378,695,1421,700,1463,707,1506,712,1549,718])
    .concat(seg(Z2, 0, [0,722,43,737,108,755,172,760,236,763,300,768,364,767,428,758,492,748,556,746,620,745,684,742,748,740,812,742,876,750,940,754,1060,754,1120,747,1175,738,1240,725,1302,710,1367,692,1431,675,1495,653,1559,642]))
    .concat(seg(Z3, 0, [14,638,66,630,132,617,196,605,271,590,325,573,377,566,428,553,505,530,582,513,633,497,659,483,709,465,788,448,866,432,942,418,1019,402,1097,385,1174,372,1251,364,1326,353]));

  var m = '';
  [32,52,72,91,111,131,150,170,190,209,229,249,268,288,308,327].forEach(function (y) { m += ln(0, y + .5, 1922, y + .5, 'grid'); });
  var types = [];
  for (var i = 0; i * 5 < C.length; i++) {
    var t = C[i * 5], a = C[i * 5 + 1] / 3, b = C[i * 5 + 2] / 3, c = C[i * 5 + 3] / 3, d = C[i * 5 + 4] / 3;
    var x = Math.round(XI(i));
    types.push(t);
    var cls = t === 'R' ? 'c-r' : t === 'C' ? 'c-c' : 'c-w';
    m += ln(x + .5, c, x + .5, d, cls);
    if (t === 'W') m += ln(x - 3, a, x + 4, a, cls);
    else if (b - a < 2.5) m += rc(x - 3, a, 7, Math.max(b - a, 1), t === 'R' ? 'c-rf' : 'c-c');
    else m += rc(x - 3 + .5, Math.round(a) + .5, 6, Math.round(b - a), cls);
  }
  m += poly(MA60, 'l-g') + poly(MA20, 'l-m') + poly(MA10, 'l-y') + poly(MA5, 'l-w');
  var marks = [616, 654, 673];
  [68,111,175,195,261,323,345,389,408,451,474,559,602,666,708,751,922,942,965,1006,1241,1498,1520,1541].forEach(function (v) { marks.push(700 + v / 2.24); });
  [16,45,351,403,430,456,506,534,660,763,790,920,945,970,995,1047,1228,1332].forEach(function (v) { marks.push(1400 + v / Z3[1]); });
  marks.forEach(function (x) { m += tx(x.toFixed(1), 25, 'x', 'xm'); });
  m += ln(320, 329, 330, 329, 'note-l') + tx(333, 329, '11.97', 'note');
  m += ln(1645, 39, 1655, 42, 'note-l') + ln(1645, 37, 1645, 44, 'note-l') + tx(1657, 44, '15.65', 'note');
  m += tx(1177, 344, 'S', 'sm');
  /* axis */
  m += ln(1925.5, 4, 1925.5, 349, 'rule') + ln(1976, 4, 1976, 349, 'rule');
  m += ln(1925, 25.5, 1976, 25.5, 'rule') + ln(1925, 167.5, 1976, 167.5, 'rule');
  m += '<path class="rule" d="M1900 13.5L1904.5 9L1909 13.5L1904.5 18Z"/>' + rc(1913.5, 9.5, 9, 8, 'rule') + ln(1919.5, 9, 1919.5, 18, 'rule');
  m += ln(1908, 104.5, 1925, 104.5, 'l-y') + ln(1914, 227.5, 1925, 227.5, 'l-g');
  [['14.80',34,'ax ax-w'],['1082',50,'ax ax-o'],['14.79',68,'ax ax-w'],['1373',84,'ax ax-o'],['14.80',108,'ax'],['0.09',124,'ax'],['0.61%',140,'ax'],['3801',156,'ax ax-w']].forEach(function (r) { m += tx(1973, r[1], r[0], r[2]); });
  m += '<path class="tri" d="M1940 129L1945 119L1950 129Z"/>';
  [[171,'12%'],[190,'10%'],[209,'8%'],[229,'6%'],[249,'4%'],[268,'2%'],[288,'0%'],[308,'-2%'],[327,'-4%']].forEach(function (r) { m += tx(1973, r[0], r[1], 'ax') + ln(1925, r[0] + .5, 1931, r[0] + .5, 'rule'); });
  put('svg-main', 4, 345, m);

  /* volume */
  var VT = [268,258,275,275,286,292,303,303,277,246,252,292,255,277,178,240,254,267,282,275,246,278,278,283,268,252,258,258,288,234,295,294,294,277,275,300,268,249,232,279,310,315,291,297,291,235,264,272,313,280,234,274,181,192,250,261,279,256,279,262,273,268,282,272,292,300,294,297,298,282,300,296,298,315,
    310,312,298,310,316,303,300,310,315,208,280,277,297,293,307,315,290,302,280,309,274,244,290,300,273,304,312,313,315,298,277,292,283,283,274,295,293,291,234,274,307,301,118,247,283,285,285,283,277,256,232,181,187,243,274,234,256,220,273,243,270,268,243,241,267,280,205,187,245,222,245,270,264,
    298,294,298,262,226,240,229,234,263,172,201,271,243,198,238,216,91,88,229,184,195,229,187,246,250,156,207,255,264,271,246,240,283,263,288,280,253,286,241,216,258,175,237,267,148,243,207,241,186,265,234,283];
  var v = '';
  [377, 417].forEach(function (y) { v += ln(0, y + .5, 1922, y + .5, 'grid'); });
  VT.forEach(function (z, i) {
    var top = Math.round(340 + z / 3), x = Math.round(XI(i)), t = types[i];
    if (t === 'W') t = i === 175 ? 'C' : 'R';
    if (t === 'R') v += rc(x - 3 + .5, top + .5, 6, 457 - top, 'c-r');
    else v += rc(x - 3, top, 7, 458 - top, 'c-c');
  });
  var VY = seg(Z1, 340, [12,278,55,276,97,275,120,280,162,290,205,285,247,270,290,265,310,248,353,242,397,243,418,265,460,272,525,270,568,268,610,265,631,262,673,270,716,275,738,288,758,290,801,280,823,265,866,266,908,282,951,300,973,285,1016,272,1078,272,1121,260,1143,235,1164,227,1206,235,1228,255,1250,267,1293,272,1378,272,1399,282,1441,290,1484,296,1560,297])
    .concat(seg(Z2, 340, [0,303,43,305,108,310,194,310,215,295,300,271,322,290,364,300,428,300,471,280,534,280,620,305,642,310,706,295,748,285,812,285,855,280,897,280,919,247,1004,243,1026,275,1046,283,1090,258,1132,225,1154,220,1196,223,1217,240,1260,253,1325,258,1409,258,1431,245,1452,238,1517,223,1559,253]))
    .concat(seg(Z3, 340, [0,257,66,287,117,278,168,247,221,238,271,222,298,230,325,230,350,217,402,235,428,205,453,167,478,172,530,157,582,205,606,208,635,222,685,210,709,225,762,232,813,258,866,262,917,270,993,270,1019,257,1072,235,1097,226,1123,228,1147,217,1174,214,1226,225,1251,205,1277,228,1301,230,1326,242]));
  var VM = seg(Z1, 340, [12,280,55,275,97,275,140,282,205,280,268,280,310,265,353,255,397,258,440,257,482,258,525,265,610,265,673,273,716,272,758,280,823,270,866,278,908,282,951,285,1016,278,1036,287,1078,285,1121,260,1143,250,1186,253,1228,255,1270,247,1293,253,1314,252,1356,270,1441,282,1506,288,1560,295])
    .concat(seg(Z2, 340, [0,298,100,302,194,310,215,297,322,290,407,288,428,295,471,290,578,290,620,297,663,293,684,297,769,295,855,283,897,283,919,265,962,262,1046,265,1090,258,1111,245,1132,253,1217,240,1240,235,1290,235,1340,255,1409,255,1431,247,1559,243]))
    .concat(seg(Z3, 340, [0,247,66,255,93,260,117,262,221,262,271,240,298,240,350,230,402,228,428,215,453,197,530,197,556,190,606,190,633,192,659,186,685,195,709,214,735,217,788,232,813,232,839,244,890,244,917,255,942,265,993,266,1019,258,1072,253,1123,250,1147,235,1226,225,1251,217,1277,224,1301,220,1326,232]));
  v += poly(VY, 'l-y') + poly(VM, 'l-m');
  v += ln(1925.5, 350, 1925.5, 458, 'rule') + ln(1976, 350, 1976, 458, 'rule');
  v += ln(1925, 377.5, 1931, 377.5, 'rule') + ln(1925, 417.5, 1931, 417.5, 'rule');
  v += tx(1973, 377, '10000', 'ax') + tx(1973, 417, '5000', 'ax');
  v += rc(1926.5, 389.5, 49, 16, 'blue-box') + tx(1928, 397.5, '6473', 'ax ax-lb');
  v += rc(1926.5, 441.5, 31, 15, 'rule') + tx(1955, 449, 'X100', 'ax');
  put('svg-vol', 350, 108, v);

  /* macd */
  var MH = [562,513,483,450,430,420,420,438,435,418,420,423,450,477,455,455,453,480,508,540,582,612,638,635,612,578,580,585,600,630,650,665,668,670,643,628,600,580,543,522,510,513,530,540,540,510,495,500,503,500,486,477,455,453,460,480,497,505,527,527,540,565,597,615,603,600,603,597,605,622,630,615,598,
    590,605,610,625,625,612,607,585,567,562,528,516,505,505,516,513,522,546,546,537,537,532,516,520,528,555,565,576,579,579,572,562,556,545,540,535,545,545,540,555,572,579,576,552,545,530,533,545,546,558,555,545,533,518,516,512,532,530,525,525,534,534,534,544,546,562,566,562,556,549,549,552,565,588,
    600,615,612,600,579,570,562,562,562,552,555,558,562,588,597,594,570,548,534,519,528,528,513,513,516,510,525,546,562,572,592,609,609,627,633,633,624,612,591,572,565,552,552,558,549,549,562,562,572,576,591,594];
  var k = '';
  [500, 553].forEach(function (y) { k += ln(0, y + .5, 1922, y + .5, 'grid'); });
  k += ln(0, 527.5, 1922, 527.5, 'zero');
  MH.forEach(function (z, i) {
    var x = Math.round(XI(i)) + .5, y = 340 + z / 3;
    if (z !== 562) k += ln(x, y.toFixed(0), x, 527, z < 562 ? 'c-rf' : 'c-c');
  });
  var MW = seg(Z1, 340, [12,790,35,765,55,735,75,700,97,675,120,650,140,633,162,630,183,610,205,585,247,552,290,552,310,530,332,513,353,505,375,505,397,510,418,525,440,555,460,585,483,602,503,605,525,600,546,590,588,590,610,600,631,630,653,655,673,672,695,685,716,700,738,698,758,696,801,680,823,660,845,640,866,630,887,628,908,633,951,633,973,612,994,592,1036,585,1058,578,1078,560,1101,540,1121,515,1143,495,1164,492,1228,490,1250,497,1271,493,1293,496,1314,510,1336,530,1356,547,1378,548,1441,560,1463,570,1484,585,1506,597,1527,593,1560,593])
    .concat(seg(Z2, 340, [0,592,43,620,86,636,130,640,172,625,215,600,258,573,300,565,322,560,343,560,364,568,386,565,428,558,450,548,471,535,514,532,534,548,578,558,642,565,663,560,684,550,727,537,780,535,812,530,855,545,897,553,919,540,962,522,1004,522,1046,527,1090,520,1132,495,1175,480,1217,480,1240,470,1290,468,1325,460,1370,463,1400,475,1440,473,1470,464,1517,464,1560,490]))
    .concat(seg(Z3, 340, [0,493,30,508,66,517,117,510,168,500,240,495,330,495,350,515,375,522,402,525,428,512,453,498,505,478,531,477,582,458,606,452,633,447,659,439,685,441,709,447,735,457,762,465,813,495,839,500,866,512,890,527,917,537,942,541,968,543,1019,527,1072,518,1123,518,1147,512,1174,512,1199,520,1251,524,1277,530,1301,542,1326,548]));
  var MY = seg(Z1, 340, [12,788,55,775,97,745,140,705,183,675,225,635,268,605,310,585,353,560,375,547,397,540,440,540,482,553,503,570,546,578,588,582,631,600,653,610,695,640,738,660,780,670,801,675,845,660,908,648,951,642,994,627,1036,617,1078,600,1121,572,1143,555,1186,533,1228,517,1271,510,1314,508,1336,515,1356,522,1399,528,1441,535,1484,550,1527,568,1560,577])
    .concat(seg(Z2, 340, [0,577,65,597,108,613,151,620,194,622,258,603,300,588,364,575,428,566,471,560,514,550,556,551,620,556,663,558,727,548,812,540,855,542,919,542,984,530,1046,530,1090,525,1132,515,1196,500,1260,485,1325,475,1431,472,1495,467,1559,470]))
    .concat(seg(Z3, 340, [0,476,41,486,93,496,117,499,255,499,298,495,350,498,375,507,428,508,478,504,531,492,582,484,633,473,685,459,735,458,788,463,839,473,890,490,917,497,968,516,1019,524,1072,522,1174,516,1251,520,1277,520,1301,525,1326,530]));
  k += poly(MW, 'l-w') + poly(MY, 'l-y');
  k += ln(1925.5, 459, 1925.5, 606, 'rule') + rc(1927, 460, 48, 146, 'rule2');
  [[473,'0.40'],[500,'0.20'],[527,'0.00'],[553,'-0.20']].forEach(function (r) { k += tx(1973, r[0], r[1], 'ax') + ln(1928, r[0] + .5, 1933, r[0] + .5, 'rule'); });
  [487,514,540].forEach(function (y) { k += ln(1928, y + .5, 1931, y + .5, 'rule'); });
  put('svg-macd', 459, 147, k);

  /* zjqdl */
  var z = ln(0, 627.5, 1922, 627.5, 'l-y');
  [[300,323],[812,835],[1068,1090],[1112,1133]].forEach(function (r) { z += rc(r[0] / 2.24, 626, (r[1] - r[0]) / 2.24, 1, 'y-bump'); });
  [[204,226],[1122,1145]].forEach(function (r) { z += rc(700 + r[0] / 2.24, 626, (r[1] - r[0]) / 2.24, 1, 'y-bump'); });
  [[232,258],[415,440],[1135,1160]].forEach(function (r) { z += rc(1400 + r[0] / Z3[1], 626, (r[1] - r[0]) / Z3[1], 1, 'y-bump'); });
  z += ln(1925.5, 607, 1925.5, 628, 'rule') + ln(1976, 607, 1976, 628, 'rule');
  put('svg-zj', 607, 21, z);

  /* kdj */
  var KW = seg(Z1, 630, [12,270,35,220,60,180,80,155,120,137,140,137,162,145,183,132,205,127,225,140,247,143,268,170,290,200,310,160,332,148,353,138,375,165,397,205,418,235,440,262,483,295,503,290,525,265,546,245,568,240,588,225,610,240,631,270,653,285,673,300,695,308,716,320,738,308,758,297,780,280,801,250,823,195,845,175,866,162,887,163,908,195,930,235,951,238,973,190,994,172,1016,185,1036,195,1058,190,1078,155,1100,140,1121,133,1143,145,1164,165,1186,180,1206,192,1228,192,1250,225,1271,230,1293,255,1314,280,1336,300,1356,310,1378,285,1399,265,1421,268,1441,268,1463,285,1484,305,1506,303,1527,265,1549,240,1560,232]);
  var KY = seg(Z1, 630, [12,275,35,258,60,228,97,190,140,160,162,155,205,142,247,142,290,170,332,158,375,155,418,210,460,245,503,268,525,268,568,255,588,243,631,247,673,280,716,298,758,300,801,270,845,225,887,195,908,193,951,218,994,195,1036,192,1058,192,1121,155,1164,152,1206,172,1271,205,1314,240,1356,277,1399,275,1441,270,1484,287,1506,292,1549,272,1560,258]);
  var KM = seg(Z1, 630, [12,260,35,170,60,100,80,65,120,65,140,85,162,128,183,103,205,100,225,140,247,143,268,220,290,260,310,155,332,125,353,112,375,185,397,250,418,320,440,365,460,360,483,377,503,340,525,280,546,215,568,210,588,190,610,225,631,300,653,340,673,352,695,353,716,365,738,320,758,300,780,260,801,190,823,85,845,70,866,85,887,120,908,220,930,287,951,282,973,155,994,125,1016,170,1036,198,1058,180,1078,100,1100,82,1121,87,1143,135,1164,170,1186,215,1206,235,1228,225,1250,287,1271,275,1293,320,1314,355,1336,380,1356,372,1378,285,1399,260,1421,265,1441,253,1463,310,1484,350,1506,325,1527,235,1549,185,1560,182]);
  /* remaining J waypoints, read at 1568-wide scale */
  var JW = [475,462,490,478,505,497,520,490,535,465,555,445,570,470,585,497,600,465,615,437,630,445,645,475,665,498,685,470,705,437,720,443,735,470,748,490,762,445,775,462,800,497,820,490,845,445,870,437,885,452,905,495,925,500,945,475,960,445,975,437,990,450,1010,480,1035,492,1055,470,1075,445,1090,441,1105,455,1125,490,1150,500,1170,480,1195,440,1215,432,1235,450,1250,490,1256,493];
  var dy = KY[KY.length - 1][1], lastX = KY[KY.length - 1][0], S = 2361 / 1568;
  for (var q = 0; q < JW.length; q += 2) {
    var jx = JW[q] * S, jy = JW[q + 1] * S;
    var steps = Math.max(1, Math.round((jx - lastX) / 9.53));
    var j0 = KM[KM.length - 1];
    for (var s = 1; s <= steps; s++) {
      var fx = lastX + (jx - lastX) * s / steps, fy = j0[1] + (jy - j0[1]) * s / steps;
      dy += (fy - dy) * .2;
      KM.push([fx, fy]); KY.push([fx, dy]); KW.push([fx, (fy + 2 * dy) / 3]);
    }
    lastX = jx;
  }
  var j = '';
  [658,677,703,730,748].forEach(function (y) { j += ln(0, y + .5, 1922, y + .5, 'grid'); });
  j += poly(KM, 'l-m') + poly(KW, 'l-w') + poly(KY, 'l-y');
  j += ln(1925.5, 629, 1925.5, 761, 'rule') + ln(1976, 629, 1976, 761, 'rule');
  [[658,'100.00'],[677,'80.00'],[703,'50.00'],[730,'20.00'],[748,'0.00']].forEach(function (r) { j += tx(1973, r[0], r[1], 'ax'); });
  put('svg-kdj', 629, 132, j);

  /* time axis */
  var tm = '';
  for (var tickX = 120; tickX < 1920; tickX += 39.5) tm += ln(Math.round(tickX) + .5, 762, Math.round(tickX) + .5, 765, 'rule');
  tm += tx(5, 770, '2014年', 'tl');
  [[81,'2'],[234,'3'],[434,'4'],[633,'5'],[826,'6'],[1015,'7'],[1234,'8'],[1435,'9'],[1636,'10'],[1806,'11']].forEach(function (r) {
    tm += ln(r[0] + .5, 762, r[0] + .5, 777, 'rule') + tx(r[0] + 2, 770, r[1], 'tl');
  });
  tm += rc(878.5, 762.5, 77, 14, 'tl-box') + tx(917, 770, '2014/06/11/三', 'tl-d');
  tm += ln(1925.5, 762, 1925.5, 777, 'rule') + ln(1976, 762, 1976, 777, 'rule') + tx(1950, 769.5, '日线', 'tl-c');
  put('svg-time', 762, 15, tm);
})();
```
